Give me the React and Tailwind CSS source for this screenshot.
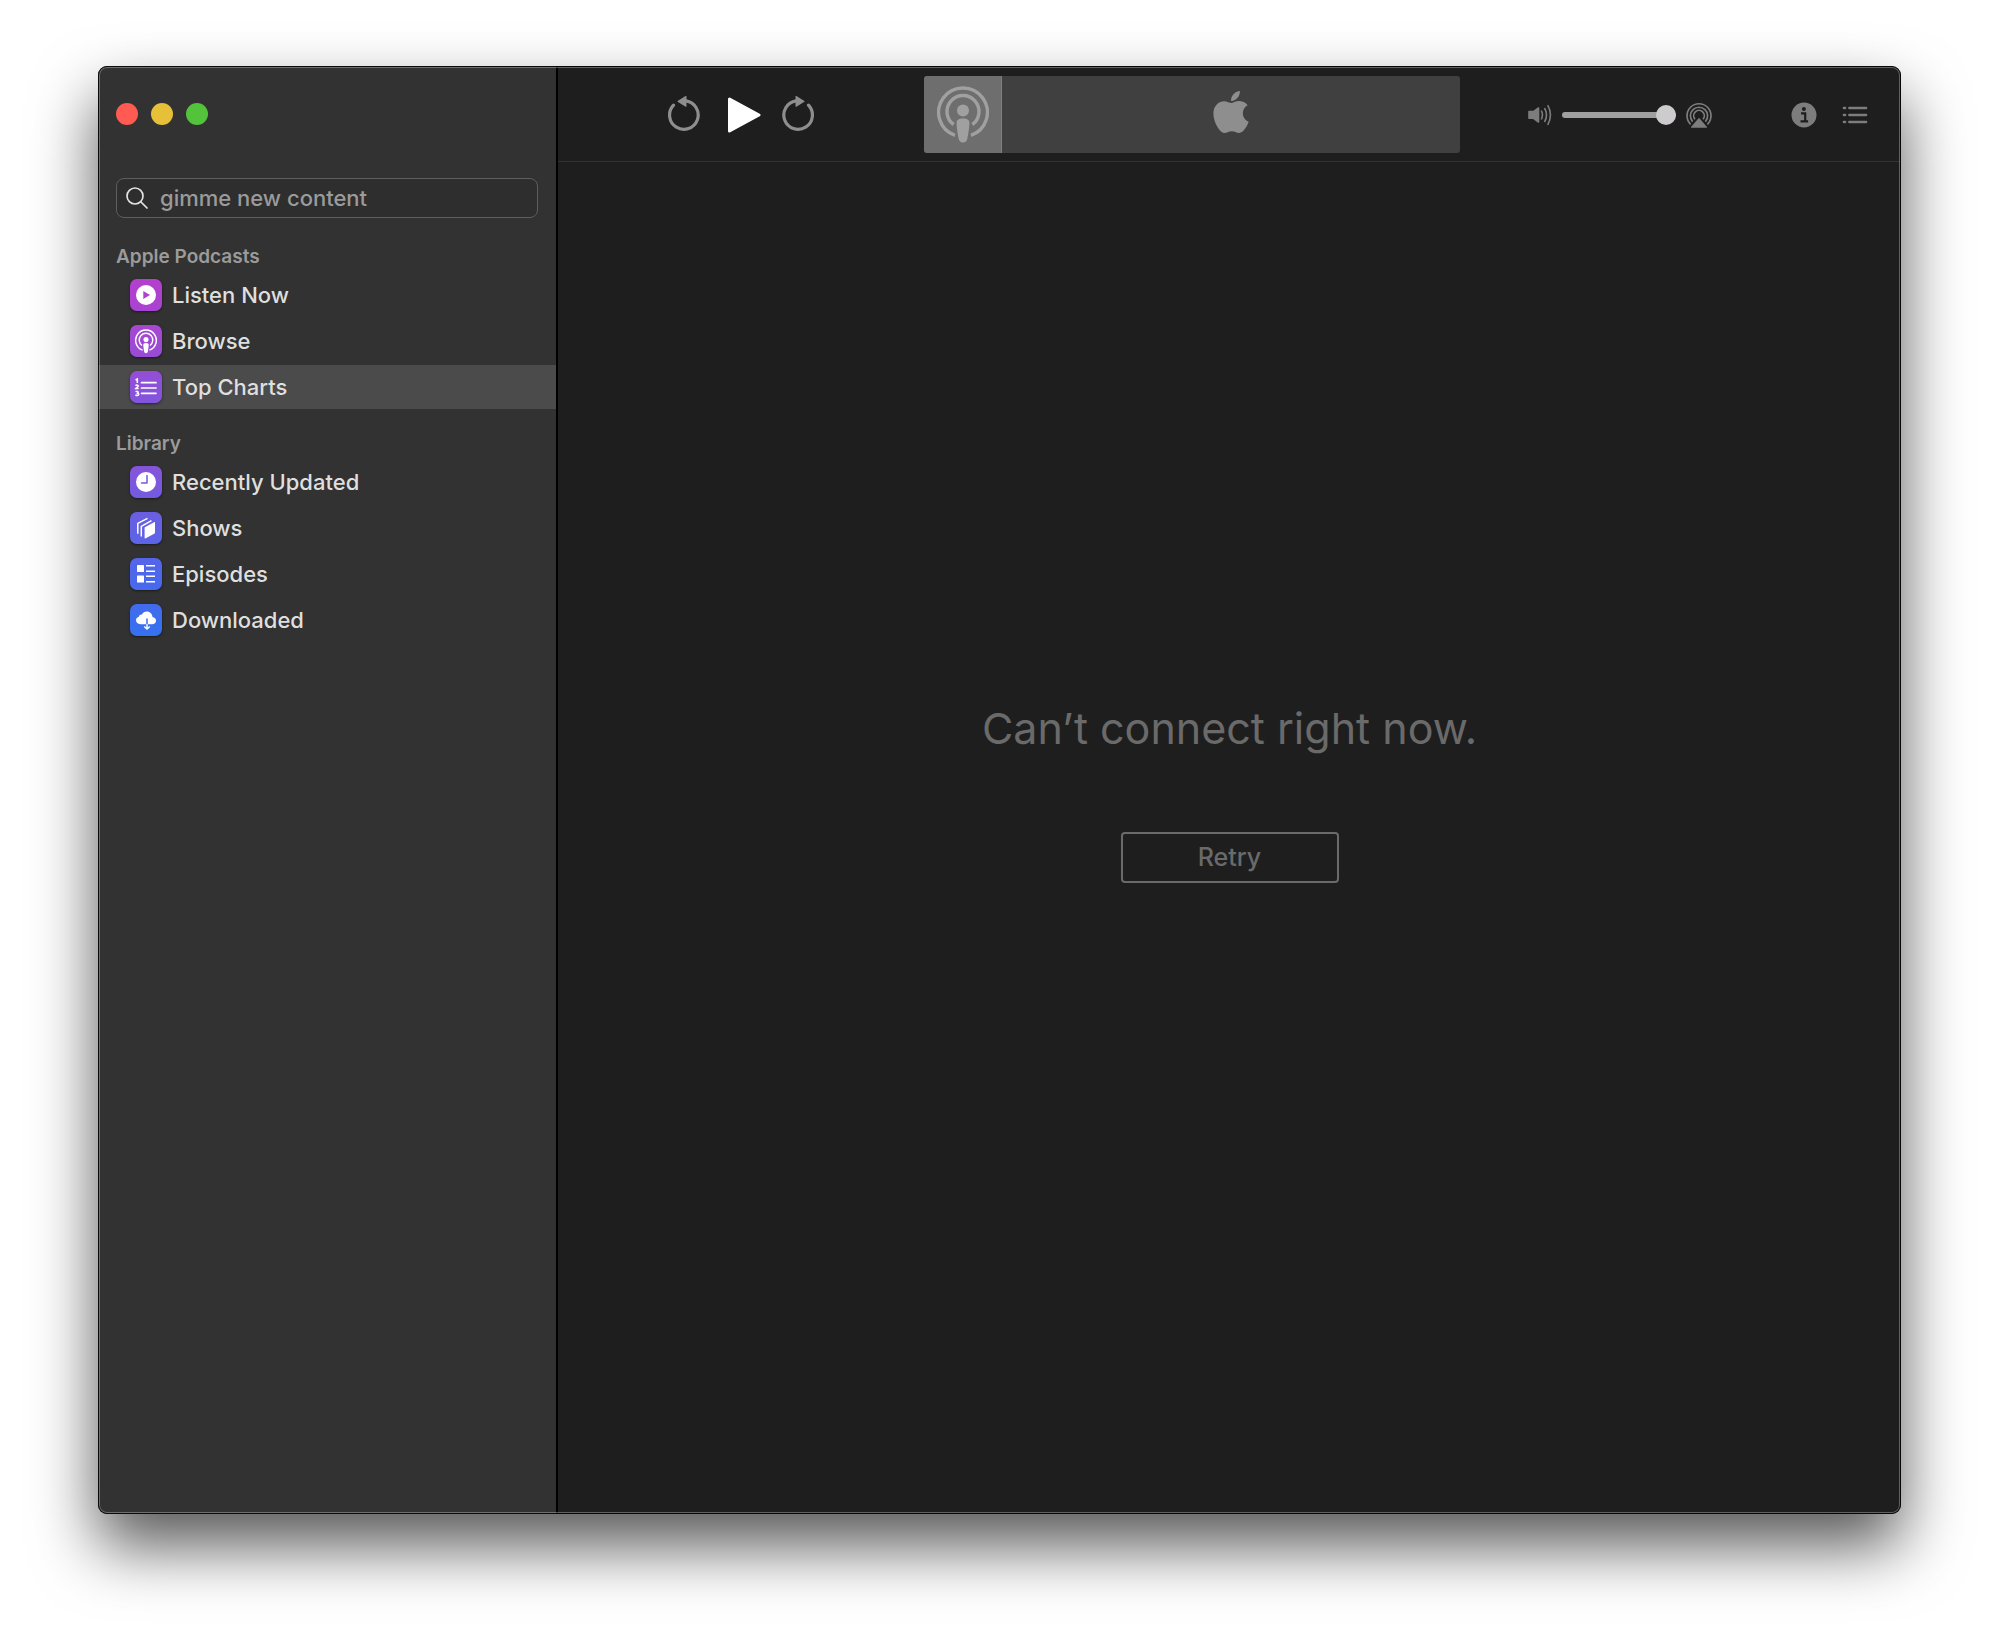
import { FaApple } from "react-icons/fa";

function PodcastGlyph({ className }) {
  return (
    <svg viewBox="0 0 52 58" className={className} fill="none" aria-hidden="true">
      <path d="M18 49.4A24.4 24.4 0 1 1 34 49.4" stroke="currentColor" strokeWidth="3.4" />
      <path d="M16.6 38.5A16 16 0 1 1 35.4 38.5" stroke="currentColor" strokeWidth="3.4" />
      <circle cx="26" cy="24.5" r="6" fill="currentColor" />
      <path d="M26 32.5c4.6 0 6.4 1.6 6.4 4.6 0 3.600-1 10.400-2 15.400-.6 2.600-1.800 4-4.400 4s-3.800-1.400-4.400-4c-1-5-2-11.800-2-15.400 0-3 1.800-4.600 6.400-4.600z" fill="currentColor" />
    </svg>
  );
}

function ListenIcon() {
  return (
    <svg viewBox="0 0 32 32" className="size-8" aria-hidden="true">
      <path fillRule="evenodd" fill="#fff" d="M16 6a10 10 0 1 0 0 20 10 10 0 0 0 0-20zm-2.700 6v8l6.700-4z" />
    </svg>
  );
}

function ChartsIcon() {
  return (
    <svg viewBox="0 0 32 32" className="size-8" fill="none" stroke="#fff" aria-hidden="true">
      <path d="M11.500 11.700H26M11.500 17H26M11.500 22.300H26" strokeWidth="1.700" strokeLinecap="round" />
      <path d="M5.500 8.800l1.800-.9V12M5.500 14.600c1-.9 3-.6 2.700.6-.2.900-2 1.500-2.500 2.300h3M5.500 20.600c2-.7 3.200.2 2.500 1.100-.4.500-1 .5-1.400.5 2 0 2.600 1 1.800 1.800-.6.600-2 .5-3 0" strokeWidth="1.500" />
    </svg>
  );
}

function ClockIcon() {
  return (
    <svg viewBox="0 0 32 32" className="size-8" aria-hidden="true">
      <circle cx="16" cy="16" r="10" fill="#fff" />
      <path d="M17 9.500V17h-5.500" fill="none" stroke="#7a58de" strokeWidth="1.500" strokeLinecap="round" strokeLinejoin="round" />
    </svg>
  );
}

function ShowsIcon() {
  return (
    <svg viewBox="0 0 32 32" className="size-8" fill="none" aria-hidden="true">
      <path d="M14.800 15.200L24 10.200c.6-.3 1 0 1 .6v9.700c0 .6-.2 1-.8 1.300l-8.400 4.500c-.7.400-1.200.1-1.200-.6V15.700z" fill="#fff" />
      <path d="M11.300 24.500V14.300l10.200-5.700M7.800 21.700V11.300l9.700-5" stroke="#fff" strokeWidth="1.500" strokeLinejoin="round" />
    </svg>
  );
}

function EpisodesIcon() {
  return (
    <svg viewBox="0 0 32 32" className="size-8" fill="#fff" aria-hidden="true">
      <rect x="7" y="7" width="7" height="7" rx=".6" />
      <rect x="7" y="17.500" width="7" height="7" rx=".6" />
      <path d="M16 7h9v1.500h-9zM16 12.400h9v1.500h-9zM16 17.500h9v1.500h-9zM16 23h9v1.500h-9z" />
    </svg>
  );
}

function DownloadedIcon() {
  return (
    <svg viewBox="0 0 32 32" className="size-8" fill="none" aria-hidden="true">
      <path d="M10.500 20.200c-2.700 0-4.500-1.600-4.500-3.900 0-1.800 1.200-3.200 2.900-3.600.1-1.500 1.500-2.500 3-2.200C12.900 8.600 14.700 7.500 16.800 7.500c3.200 0 5.600 2.500 5.700 5.600 2 .3 3.500 1.700 3.500 3.600 0 2-1.600 3.500-3.900 3.500z" fill="#fff" />
      <path d="M17 14.500v5.700" stroke="#3c6cee" strokeWidth="1.500" />
      <path d="M17 20.200v4.600M14.200 22.500l2.800 2.600 2.800-2.600" stroke="#fff" strokeWidth="1.500" />
    </svg>
  );
}

function BrowseIcon() {
  return <PodcastGlyph className="h-[25px] w-[22px] text-white" />;
}

const sections = [
  {
    title: "Apple Podcasts",
    items: [
      { label: "Listen Now", icon: ListenIcon, tile: "from-[#b43fcc] to-[#a843d2]" },
      { label: "Browse", icon: BrowseIcon, tile: "from-[#a747d0] to-[#984bd6]" },
      { label: "Top Charts", icon: ChartsIcon, tile: "from-[#964dd6] to-[#8055dc]", active: true },
    ],
  },
  {
    title: "Library",
    items: [
      { label: "Recently Updated", icon: ClockIcon, tile: "from-[#8654d9] to-[#725be1]" },
      { label: "Shows", icon: ShowsIcon, tile: "from-[#6b5ee0] to-[#5b64e8]" },
      { label: "Episodes", icon: EpisodesIcon, tile: "from-[#5565e8] to-[#4669ee]" },
      { label: "Downloaded", icon: DownloadedIcon, tile: "from-[#416bec] to-[#3471f0]" },
    ],
  },
];

function Sidebar() {
  return (
    <aside className="w-[460px] shrink-0 border-r-2 border-black bg-[#323232]">
      <div className="flex gap-[13px] px-[18px] pt-[37px]">
        <button aria-label="Close" className="size-[22px] rounded-full bg-[#ff5b52]" />
        <button aria-label="Minimize" className="size-[22px] rounded-full bg-[#e6c039]" />
        <button aria-label="Zoom" className="size-[22px] rounded-full bg-[#54c33c]" />
      </div>
      <label className="mx-[18px] mt-[53px] flex h-10 items-center gap-3 rounded-lg border border-[#5e5e5e] bg-[#2e2e2e] px-[9px]">
        <svg viewBox="0 0 22 22" className="size-[22px] shrink-0" fill="none" stroke="#e2e2e2" strokeWidth="1.700" strokeLinecap="round" aria-hidden="true">
          <circle cx="9" cy="9" r="8" />
          <path d="M15 15l6 6" />
        </svg>
        <input
          type="search"
          aria-label="Search"
          placeholder="gimme new content"
          className="min-w-0 flex-1 bg-transparent text-[22px] leading-7 font-medium outline-none placeholder:text-[#9b9b9b]"
        />
      </label>
      <nav className="flex flex-col gap-[23px] pt-[27px]">
        {sections.map((section) => (
          <section key={section.title}>
            <h2 className="px-[18px] pb-1 text-[19px] leading-6 font-semibold text-[#9b9b9b]">{section.title}</h2>
            <ul className="flex flex-col gap-0.5">
              {section.items.map(({ label, icon: Icon, tile, active }) => (
                <li key={label}>
                  <a
                    href="#"
                    aria-current={active ? "page" : undefined}
                    className={`flex h-11 items-center gap-2.5 px-8 text-[22px] leading-7 font-medium text-[#dfdfdf] ${active ? "bg-[#4b4b4b]" : ""}`}
                  >
                    <span className={`flex size-8 items-center justify-center rounded-[7px] bg-linear-to-b shadow-sm shadow-black/40 ${tile}`}>
                      <Icon />
                    </span>
                    {label}
                  </a>
                </li>
              ))}
            </ul>
          </section>
        ))}
      </nav>
    </aside>
  );
}

function SkipGlyph({ className }) {
  return (
    <svg viewBox="0 0 34 38" className={className} fill="none" aria-hidden="true">
      <path d="M6.500 9.200A14.300 14.300 0 1 0 19 4.900" stroke="#8e8e8e" strokeWidth="3.200" strokeLinecap="round" />
      <path d="M11 4.700L18.600.1c.5-.3.900-.1.900.5v9.600c0 .6-.4.800-.9.500L11 6q-1-.6 0-1.300z" fill="#8e8e8e" />
    </svg>
  );
}

function Toolbar() {
  return (
    <header className="flex h-24 items-center border-b border-[#333] pt-0.5">
      <div className="flex min-w-0 flex-[366] items-center justify-center gap-5">
        <button aria-label="Skip back">
          <SkipGlyph className="h-[38px] w-[34px]" />
        </button>
        <button aria-label="Play" className="pl-1.5">
          <svg viewBox="0 0 34 38" className="h-[38px] w-[34px]" aria-hidden="true">
            <path d="M2.500 3L32 19 2.500 35z" fill="#fff" stroke="#fff" strokeWidth="3" strokeLinejoin="round" />
          </svg>
        </button>
        <button aria-label="Skip forward">
          <SkipGlyph className="h-[38px] w-[34px] -scale-x-100" />
        </button>
      </div>

      <div className="flex h-[77px] min-w-0 flex-[536] overflow-hidden rounded-[3px] bg-[#404040]">
        <div className="flex w-[78px] items-center justify-center border-r border-[#808080] bg-[#6e6e6e]">
          <PodcastGlyph className="h-[58px] w-[52px] text-[#a0a0a0]" />
        </div>
        <div className="flex flex-1 items-center justify-center pb-1.5">
          <FaApple className="size-12 text-[#8e8e8e]" />
        </div>
      </div>

      <div className="flex min-w-0 flex-[441] items-center justify-end">
        <svg viewBox="0 0 24 22" className="h-[22px] w-6" fill="none" stroke="#7d7d7d" strokeWidth="1.600" aria-hidden="true">
          <path d="M1 7.600h4.500L10.500 4v14l-5-3.700H1z" fill="#7d7d7d" stroke="#7d7d7d" strokeLinejoin="round" />
          <path d="M13.300 6.500a10 10 0 0 1 0 9M16.500 4a14 14 0 0 1 0 14M19.700 1.200a20 20 0 0 1 0 19.600" />
        </svg>
        <input
          type="range"
          aria-label="Volume"
          defaultValue="100"
          className="ml-2.5 h-5 w-[114px] appearance-none bg-transparent [&::-webkit-slider-runnable-track]:h-1.5 [&::-webkit-slider-runnable-track]:rounded-full [&::-webkit-slider-runnable-track]:bg-[#a0a0a0] [&::-webkit-slider-thumb]:-mt-[7px] [&::-webkit-slider-thumb]:size-5 [&::-webkit-slider-thumb]:appearance-none [&::-webkit-slider-thumb]:rounded-full [&::-webkit-slider-thumb]:bg-[#cdcbcd]"
        />
        <button aria-label="AirPlay" className="ml-2.5">
          <svg viewBox="0 0 26 26" className="size-[26px]" fill="none" stroke="#7d7d7d" strokeWidth="1.700" aria-hidden="true">
            <path d="M4.600 22.300A12 12 0 1 1 21.400 22.300M6.600 19.600A8.600 8.600 0 1 1 19.400 19.600M9 17.200A5.300 5.300 0 1 1 17 17.200" />
            <path d="M13 15.700l8 9.300q.3.700-.5.700h-15q-.8 0-.5-.7z" fill="#7d7d7d" stroke="none" />
          </svg>
        </button>
        <button aria-label="Info" className="ml-[79px]">
          <svg viewBox="0 0 26 26" className="size-[26px]" aria-hidden="true">
            <circle cx="13" cy="13" r="12.500" fill="#7d7d7d" />
            <circle cx="12.900" cy="7" r="2" fill="#1e1e1e" />
            <path d="M10 11.300h4.200v7.700M9.500 19.300h7.600" fill="none" stroke="#1e1e1e" strokeWidth="2.200" />
          </svg>
        </button>
        <button aria-label="Up next" className="mr-[33px] ml-[25px]">
          <svg viewBox="0 0 26 20" className="h-5 w-[26px]" stroke="#7d7d7d" strokeWidth="2.300" strokeLinecap="round" aria-hidden="true">
            <path d="M1.800 3h1.400M7.200 3h17M1.800 10h1.400M7.200 10h17M1.800 17h1.400M7.200 17h17" />
          </svg>
        </button>
      </div>
    </header>
  );
}

export default function App() {
  return (
    <div className="flex min-h-screen bg-white px-[98px] pt-[66px] pb-[130px] font-[Inter,sans-serif]">
      <div className="relative flex flex-1 overflow-hidden rounded-[9px] bg-[#1e1e1e] shadow-[0_32px_64px_rgba(0,0,0,0.66)]">
        <Sidebar />
        <main className="flex min-w-0 flex-1 flex-col">
          <Toolbar />
          <div className="flex flex-1 flex-col items-center pt-[538px] text-[#6a6a6a]">
            <h1 className="text-[43px] leading-[56px]">Can’t connect right now.</h1>
            <button className="mt-[76px] h-[51px] w-[218px] rounded-[4px] border-2 border-[#6a6a6a] text-[25px] font-medium">Retry</button>
          </div>
        </main>
        <div className="pointer-events-none absolute inset-0 rounded-[9px] border border-black/80 inset-ring inset-ring-white/30" />
      </div>
    </div>
  );
}
